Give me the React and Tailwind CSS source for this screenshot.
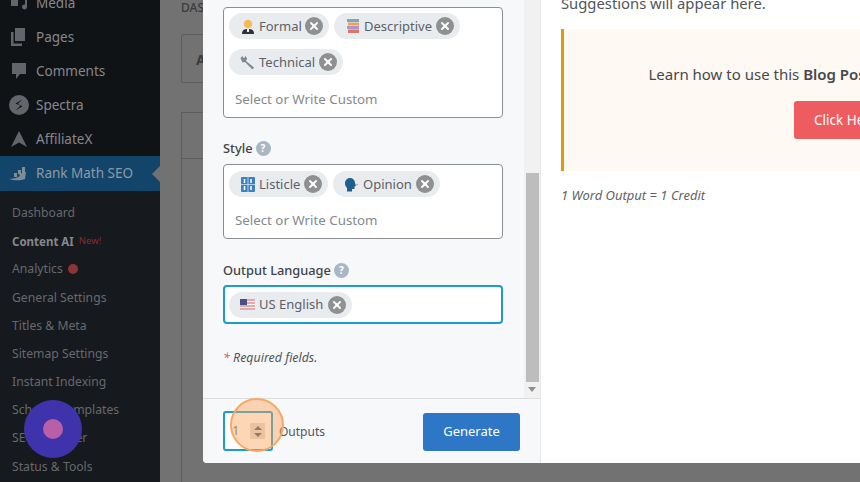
import { X } from 'lucide-react';

const font = { fontFamily: '"Noto Sans", sans-serif' };

const subItems = ['Dashboard', 'Content AI', 'Analytics', 'General Settings', 'Titles & Meta', 'Sitemap Settings', 'Instant Indexing', 'Schema Templates', 'SEO Analyzer', 'Status & Tools'];

function PagesIcon() {
  return (
    <svg width="16" height="18" viewBox="0 0 16 18" fill="#62656a">
      <path d="M4 0h10v13H4z" />
      <path d="M0 4h2.500v11.500H11V18H0z" />
    </svg>
  );
}

function CommentIcon() {
  return (
    <svg width="16" height="18" viewBox="0 0 16 18" fill="#62656a">
      <path d="M1 1h14v11H9l-4 5v-5H1z" />
    </svg>
  );
}

function MediaIcon() {
  return (
    <svg width="18" height="16" viewBox="0 0 18 16" fill="#62656a">
      <path d="M1 0h7v11H1z" />
      <path d="M10 0h7v12a2.500 2.500 0 1 1-2-2.400V4h-5z" />
    </svg>
  );
}

function SpectraIcon() {
  return (
    <svg width="20" height="20" viewBox="0 0 20 20">
      <circle cx="10" cy="10" r="10" fill="#62656a" />
      <path d="M13.500 4.500 6.500 8.500l5 2.200-5 4.800 7-4.200-4.800-2.300z" fill="#101316" />
    </svg>
  );
}

function AffiliateIcon() {
  return (
    <svg width="18" height="16" viewBox="0 0 18 16" fill="#62656a">
      <path d="M9 0l8 16-8-4.500L1 16z" />
    </svg>
  );
}

function RankIcon() {
  return (
    <svg width="20" height="14" viewBox="0 0 20 14" fill="#7f8d99">
      <path d="M0 12c4 0 8-1 11-3l-1-2 7-2-1 7c-4 1.500-10 2-16 0z" />
      <path d="M5 6h3v4H5zM9 3h3v4H9zM13 0h3v6h-3z" />
    </svg>
  );
}

// the little emoji in the chips
function FormalIcon() {
  return (
    <svg width="14" height="15" viewBox="0 0 14 15">
      <circle cx="7" cy="5" r="4.200" fill="#f5bb52" />
      <path d="M1 15c0-4 2-5 6-5s6 1 6 5z" fill="#2e3338" />
      <path d="M6 10h2v3H6z" fill="#f3f3f3" />
    </svg>
  );
}

function BooksIcon() {
  return (
    <svg width="14" height="15" viewBox="0 0 14 15">
      <path d="M1 0h12v3H1z" fill="#7aa7c9" />
      <path d="M2 3.500h11v3H2z" fill="#e6a45c" />
      <path d="M1 7h12v3H1z" fill="#b493c6" />
      <path d="M2 10.500h11V14H2z" fill="#d9766a" />
    </svg>
  );
}

function WrenchIcon() {
  return (
    <svg width="15" height="15" viewBox="0 0 15 15" fill="#7d8790">
      <path d="M0.500 3 2.500 1l1 2 1.500-.5L5.500 0.500 7 3.500 6 6l8 6.500-1.500 2L5 7 2.500 7.500z" />
    </svg>
  );
}

function NumbersIcon() {
  return (
    <svg width="14" height="15" viewBox="0 0 14 15">
      <rect width="14" height="15" rx="1" fill="#3b82c4" />
      <path d="M3.500 2v4M10 2v4M3.500 9v4M10 9v4" stroke="#fff" strokeWidth="1.500" />
      <path d="M0 7.500h14M7 0v15" stroke="#fff" strokeWidth="0.600" />
    </svg>
  );
}

function SpeakingIcon() {
  return (
    <svg width="15" height="15" viewBox="0 0 15 15">
      <path d="M1 6a5 5 0 0 1 10 0l1 3-1.500.5V12H8v2.500H3V11C1.500 9.500 1 8 1 6z" fill="#1f5f8f" />
      <path d="M12.500 6.500l2 1-2 1z" fill="#e58a4a" />
    </svg>
  );
}

function FlagIcon() {
  return (
    <svg width="15" height="11" viewBox="0 0 15 11">
      <rect width="15" height="11" rx="1" fill="#f3f3f3" />
      <path d="M0 1h15M0 4h15M0 7h15M0 10h15" stroke="#d9606a" strokeWidth="1.200" />
      <rect width="7" height="6" fill="#4c4f86" />
    </svg>
  );
}

function Chip({ icon, label, w }) {
  return (
    <span className={`flex h-[26px] items-center rounded-full bg-[#e9ecef] pl-[11px] pr-[6px] text-[13px] text-[#5b6168] ${w}`}>
      <span className="mr-[4px] flex w-[15px] justify-center">{icon}</span>
      <span className="flex-1 whitespace-nowrap pt-[1px]">{label}</span>
      <span className="flex h-[18px] w-[18px] items-center justify-center rounded-full bg-[#8f9091]">
        <X size={12} strokeWidth={4} color="#fff" />
      </span>
    </span>
  );
}

function Help() {
  return (
    <span className="ml-[3px] flex h-[15px] w-[15px] items-center justify-center rounded-full bg-[#a9b6c4] text-[10px] font-bold text-white">?</span>
  );
}

export default function App() {
  return (
    <div className="relative flex h-[482px] w-[860px] overflow-hidden bg-[#727272]" style={font}>
      {/* Sidebar */}
      <aside className="flex w-[160px] shrink-0 flex-col bg-[#101316]">
        <div className="-mt-[14px] flex flex-col">
          {[
            { icon: <MediaIcon />, label: 'Media' },
            { icon: <PagesIcon />, label: 'Pages' },
            { icon: <CommentIcon />, label: 'Comments' },
            { icon: <SpectraIcon />, label: 'Spectra' },
            { icon: <AffiliateIcon />, label: 'AffiliateX' },
          ].map(({ icon, label }) => (
            <div key={label} className="flex h-[34px] items-center text-[13.500px] text-[#85888c]">
              <span className="flex w-[36px] justify-center pl-[1px]">{icon}</span>
              {label}
            </div>
          ))}
        </div>
        <div className="relative flex h-[35px] items-center bg-[#13456b] text-[13.500px] text-[#8d9aa5]">
          <span className="flex w-[36px] justify-center pl-[1px]"><RankIcon /></span>
          Rank Math SEO
          <span className="absolute right-0 top-[10px] h-0 w-0 border-y-[8px] border-r-[8px] border-y-transparent border-r-[#6f7173]" />
        </div>
        <div className="flex flex-1 flex-col bg-[#16191d] pl-[12px] pt-[8px] text-[12.200px] text-[#66696d]">
          {subItems.map((item) => (
            <div key={item} className="flex h-[28.200px] items-center whitespace-nowrap">
              {item === 'Content AI' ? (
                <>
                  <span className="text-[11.500px] font-bold text-[#85888c]">{item}</span>
                  <span className="ml-[5px] text-[9.500px] text-[#8a2b2b]">New!</span>
                </>
              ) : item}
              {item === 'Analytics' && <span className="ml-[5px] h-[10px] w-[10px] rounded-full bg-[#8d3535]" />}
            </div>
          ))}
        </div>
      </aside>

      {/* Page behind the modal */}
      <main className="flex-1 pl-[21px] text-[#3a3c3f]">
        <p className="pt-[1px] text-[12px] font-medium leading-[14px]">DASHBOARD</p>
        <div className="mt-[19px] h-[49px] border-b border-[#5d5d5d]">
          <div className="h-[48px] w-[60px] rounded-t-[3px] border border-b-0 border-[#5d5d5d] pl-[14px] pt-[14px] text-[14px] font-bold">A</div>
        </div>
        <div className="mt-[29px] h-[46px] border-l border-t border-[#5d5d5d]" />
        <div className="h-[330px] border-l border-t border-[#5d5d5d]" />
      </main>

      {/* Modal */}
      <div className="absolute left-[203px] top-0 flex h-[463px] w-[657px] overflow-hidden rounded-bl-[4px] bg-white">
        <div className="flex w-[338px] shrink-0 flex-col border-r border-[#e6e7e9] bg-[#f7f8fa]">
          <div className="flex h-[399px] border-b border-[#dcdde0]">
            <div className="flex-1 pl-[20px] pr-[21px] pt-[7px]">
              <div className="flex h-[111px] w-[280px] flex-col rounded-[4px] border border-[#8b8f94] bg-white pl-[5px] pt-[5px]">
                <div className="flex gap-[5px]">
                  <Chip icon={<FormalIcon />} label="Formal" w="w-[100px]" />
                  <Chip icon={<BooksIcon />} label="Descriptive" w="w-[126px]" />
                </div>
                <div className="mt-[10px]">
                  <Chip icon={<WrenchIcon />} label="Technical" w="w-[114px]" />
                </div>
                <p className="pl-[6px] pt-[14px] text-[13.300px] leading-[20px] text-[#85898e]">Select or Write Custom</p>
              </div>

              <div className="mt-[20px] flex h-[20px] items-center pt-[1px] text-[12.800px] font-medium text-[#3e4349]">Style<Help /></div>
              <div className="mt-[6px] flex h-[75px] w-[280px] flex-col rounded-[4px] border border-[#8b8f94] bg-white pl-[5px] pt-[6px]">
                <div className="flex gap-[5px]">
                  <Chip icon={<NumbersIcon />} label="Listicle" w="w-[99px]" />
                  <Chip icon={<SpeakingIcon />} label="Opinion" w="w-[107px]" />
                </div>
                <p className="pl-[6px] pt-[13px] text-[13.300px] leading-[20px] text-[#85898e]">Select or Write Custom</p>
              </div>

              <div className="mt-[21px] flex h-[20px] items-center pt-[1px] text-[12.800px] font-medium text-[#3e4349]">Output Language<Help /></div>
              <div className="mt-[5px] flex h-[39px] w-[280px] items-center rounded-[4px] border-2 border-[#1b9cc9] bg-white pl-[4px]">
                <Chip icon={<FlagIcon />} label="US English" w="w-[123px]" />
              </div>

              <p className="mt-[24px] text-[12.400px] italic leading-[20px] text-[#50555b]"><span className="text-[#d0616a]">*</span> Required fields.</p>
            </div>

            {/* Scrollbar */}
            <div className="flex w-[16px] shrink-0 flex-col bg-[#f1f1f1]">
              <div className="mt-[173px] h-[209px] w-[13px] self-center bg-[#bdbdbd]" />
              <span className="mx-auto mt-[5px] h-0 w-0 border-x-[4px] border-t-[5px] border-x-transparent border-t-[#8f8f8f]" />
            </div>
          </div>

          {/* Footer */}
          <div className="flex flex-1 items-center pl-[20px] pr-[20px]">
            <div className="flex h-[40px] w-[50px] items-center justify-between rounded-[3px] border-2 border-[#1b9cc9] bg-white pl-[7px] pr-[6px] text-[13px] text-[#6b6f73]">
              1
              <span className="flex h-[16px] w-[15px] flex-col items-center justify-center gap-[3px] bg-[#dcdcdc]">
                <span className="h-0 w-0 border-x-[4px] border-b-[4px] border-x-transparent border-b-[#555]" />
                <span className="h-0 w-0 border-x-[4px] border-t-[4px] border-x-transparent border-t-[#555]" />
              </span>
            </div>
            <span className="ml-[6px] pt-[2px] text-[12px] text-[#50555b]">Outputs</span>
            <button className="ml-auto mt-[2px] h-[38px] w-[97px] rounded-[3px] bg-[#2e77c6] text-[13px] text-white">Generate</button>
          </div>
        </div>

        {/* Suggestions */}
        <div className="flex-1 overflow-hidden pl-[20px]">
          <p className="-mt-[7px] whitespace-nowrap text-[14.800px] leading-[20px] text-[#50555b]">Suggestions will appear here.</p>
          <div className="mt-[16px] flex h-[142px] w-[573px] flex-col items-center border-l-[3px] border-[#dd9b0a] bg-[#fff9f3] pt-[34px]">
            <p className="whitespace-nowrap pl-[7px] text-[15px] leading-[22px] text-[#44484d]">
              Learn how to use this <b className="font-semibold">Blog Post Generator Tool Template</b>
            </p>
            <button className="mt-[16px] h-[38px] w-[110px] rounded-[3px] bg-[#ee5c5f] pl-[20px] text-left text-[13.500px] text-white">Click Here</button>
          </div>
          <p className="mt-[14px] text-[13px] italic leading-[20px] text-[#5f6368]">1 Word Output = 1 Credit</p>
        </div>
      </div>

      {/* Click highlight and cursor from the recording */}
      <div className="absolute left-[230px] top-[398px] h-[54px] w-[54px] rounded-full border-2 border-[#f7a862] bg-[#f9a55c]/45" />
      <div className="absolute left-[24px] top-[400px] flex h-[58px] w-[58px] items-center justify-center rounded-full bg-[#3f33ab]">
        <span className="h-[20px] w-[20px] rounded-full bg-[#b85fa8]" />
      </div>
    </div>
  );
}
